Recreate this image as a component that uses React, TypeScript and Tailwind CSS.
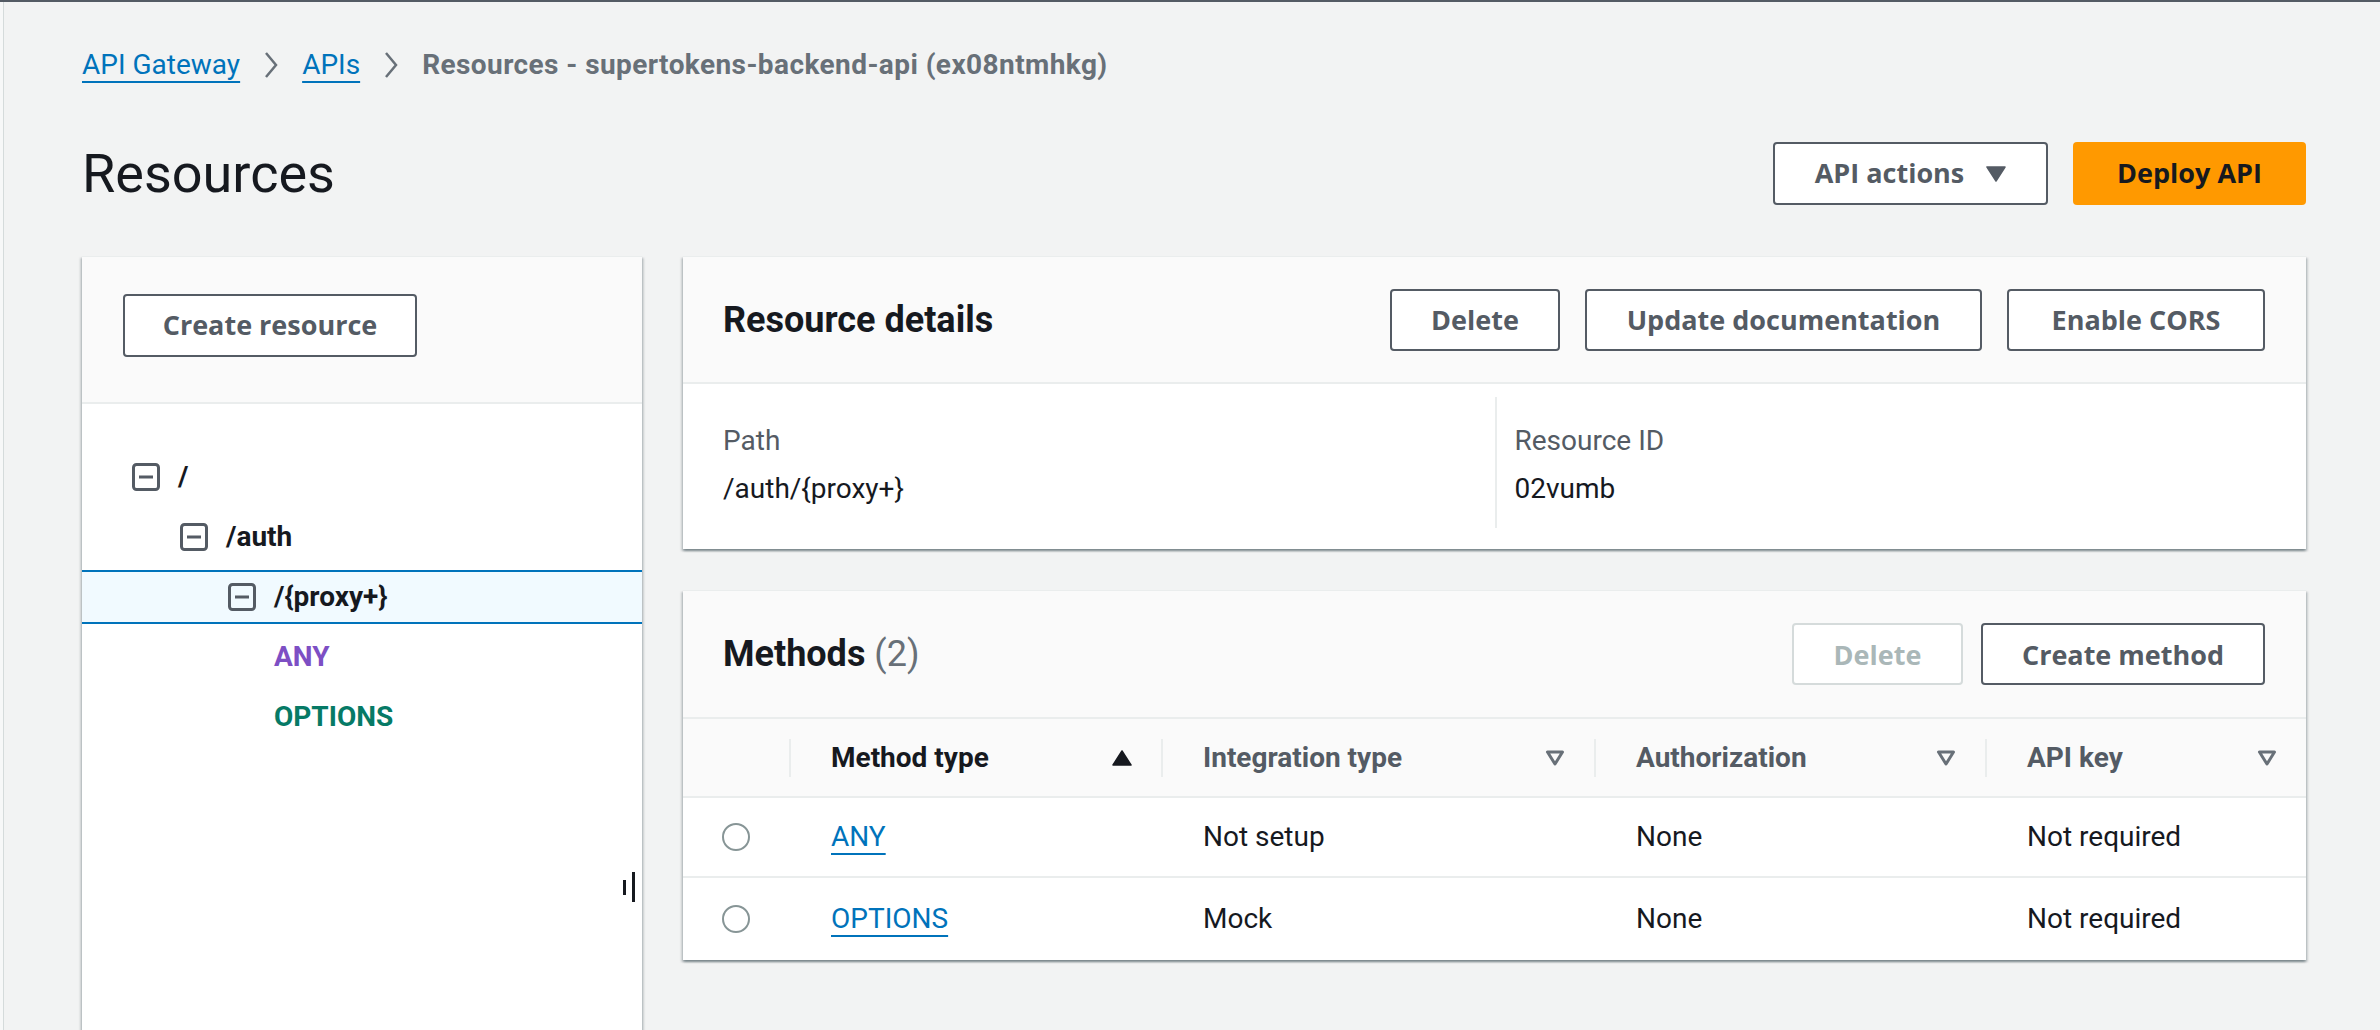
import React from 'react';

const cardShadow =
  'shadow-[0_2px_2px_0_rgba(0,28,36,0.3),2px_2px_2px_0_rgba(0,28,36,0.15),-2px_2px_2px_0_rgba(0,28,36,0.15)]';

const btnFont = "font-['Open_Sans','Roboto',sans-serif]";

function Chevron() {
  return (
    <svg width="16" height="28" viewBox="0 0 16 28" className="mx-[23px] shrink-0">
      <path d="M3 2 L13 14 L3 26" fill="none" stroke="#687078" strokeWidth="2.5" />
    </svg>
  );
}

function MinusBox() {
  return (
    <svg width="28" height="28" viewBox="0 0 28 28" className="shrink-0">
      <rect x="1.5" y="1.5" width="25" height="25" rx="3" fill="none" stroke="#545b64" strokeWidth="3" />
      <rect x="7" y="12.5" width="14" height="3" fill="#545b64" />
    </svg>
  );
}

function CaretDown() {
  return (
    <svg width="20" height="16" viewBox="0 0 20 16" className="shrink-0">
      <path d="M1 1 H19 L10 15 Z" fill="#545b64" stroke="#545b64" strokeWidth="1.5" strokeLinejoin="round" />
    </svg>
  );
}

function SortUp() {
  return (
    <svg width="20" height="16" viewBox="0 0 20 16" className="shrink-0">
      <path d="M10 1 L19 15 H1 Z" fill="#16191f" stroke="#16191f" strokeWidth="1.5" strokeLinejoin="round" />
    </svg>
  );
}

function SortNone() {
  return (
    <svg width="20" height="16" viewBox="0 0 20 16" className="shrink-0">
      <path d="M2.5 2 H17.5 L10 14 Z" fill="none" stroke="#687078" strokeWidth="3" strokeLinejoin="round" />
    </svg>
  );
}

function Button({ children, width, disabled }: { children: React.ReactNode; width: string; disabled?: boolean }) {
  return (
    <button
      className={`${width} h-[62px] rounded-[4px] border-2 bg-white text-[27px] font-bold leading-none whitespace-nowrap ${btnFont} ${
        disabled ? 'border-[#d5dbdb] text-[#aab7b8]' : 'border-[#545b64] text-[#545b64]'
      }`}
    >
      {children}
    </button>
  );
}

function TreeRow({ indent, label, selected }: { indent: string; label: string; selected?: boolean }) {
  return (
    <div
      className={`flex items-center gap-[18px] ${indent} ${
        selected ? 'h-[54px] my-[3px] bg-[#f1faff] border-y-2 border-[#0073bb]' : 'h-[60px]'
      }`}
    >
      <MinusBox />
      <span className="text-[28px] font-bold text-[#16191f]">{label}</span>
    </div>
  );
}

const methods = [
  { name: 'ANY', integration: 'Not setup', auth: 'None', key: 'Not required' },
  { name: 'OPTIONS', integration: 'Mock', auth: 'None', key: 'Not required' },
];

function HeaderCell({ label, active, sort }: { label: string; active?: boolean; sort: 'up' | 'none' }) {
  return (
    <div className="flex items-center h-full">
      <div className="w-[2px] h-[38px] bg-[#eaeded]" />
      <span className={`ml-[40px] flex-1 text-[28px] font-bold ${active ? 'text-[#16191f]' : 'text-[#545b64]'}`}>
        {label}
      </span>
      <div className="mr-[29px]">{sort === 'up' ? <SortUp /> : <SortNone />}</div>
    </div>
  );
}

export default function App() {
  return (
    <div className="h-[1030px] w-[2380px] overflow-hidden bg-[#f2f3f3] font-['Roboto','Helvetica',sans-serif] text-[#16191f] flex flex-col">
      <div className="h-[2px] shrink-0 bg-[#545b64]" />
      <div className="flex flex-1 min-h-0">
        <div className="w-[4px] shrink-0 border-r border-[#d5dbdb] bg-[#f7f8f8]" />
        <main className="ml-[78px] w-[2224px] flex flex-col">
          {/* breadcrumbs */}
          <nav className="mt-[45px] h-[36px] flex items-center text-[28px]">
            <a className="text-[#0073bb] underline decoration-2 underline-offset-[7px]">API Gateway</a>
            <Chevron />
            <a className="text-[#0073bb] underline decoration-2 underline-offset-[7px]">APIs</a>
            <Chevron />
            <span className="font-bold text-[#687078] tracking-[0.42px]">Resources - supertokens-backend-api (ex08ntmhkg)</span>
          </nav>

          {/* page header */}
          <div className="mt-[59px] h-[63px] flex items-center justify-between">
            <h1 className="text-[54px] font-normal leading-none text-[#16191f]">Resources</h1>
            <div className="flex gap-[25px]">
              <button className={`w-[275px] h-[63px] rounded-[4px] border-2 border-[#545b64] bg-white flex items-center justify-center gap-[22px] text-[27px] font-bold text-[#545b64] ${btnFont}`}>
                API actions
                <CaretDown />
              </button>
              <button className={`w-[233px] h-[63px] rounded-[4px] bg-[#ff9900] text-[27px] font-bold text-[#16191f] ${btnFont}`}>
                Deploy API
              </button>
            </div>
          </div>

          <div className="mt-[51px] flex gap-[41px] items-start">
            {/* resource tree */}
            <aside className={`relative w-[560px] h-[820px] shrink-0 bg-white border-t border-[#eaeded] ${cardShadow}`}>
              <div className="bg-[#fafafa] border-b-2 border-[#eaeded] px-[41px] pt-[37px] pb-[45px]">
                <button className={`w-[294px] h-[63px] rounded-[4px] border-2 border-[#545b64] bg-white text-[27px] font-bold text-[#545b64] ${btnFont}`}>
                  Create resource
                </button>
              </div>
              <div className="pt-[43px]">
                <TreeRow indent="pl-[50px]" label="/" />
                <TreeRow indent="pl-[98px]" label="/auth" />
                <TreeRow indent="pl-[146px]" label="/{proxy+}" selected />
                <div className="h-[60px] flex items-center pl-[192px] text-[28px] font-bold text-[#7d4fc4]">ANY</div>
                <div className="h-[60px] flex items-center pl-[192px] text-[28px] font-bold text-[#067a66]">OPTIONS</div>
              </div>
              <div className="absolute left-[541px] top-[615px] flex items-center gap-[6px]">
                <div className="w-[3px] h-[15px] bg-[#16191f]" />
                <div className="w-[3px] h-[30px] bg-[#16191f]" />
              </div>
            </aside>

            <div className="w-[1623px] flex flex-col gap-[41px]">
              {/* resource details */}
              <section className={`bg-white border-t border-[#eaeded] ${cardShadow}`}>
                <div className="h-[127px] flex items-center justify-between bg-[#fafafa] border-b-2 border-[#eaeded] pl-[40px] pr-[41px]">
                  <h2 className="text-[36px] font-bold text-[#16191f]">Resource details</h2>
                  <div className="flex gap-[25px]">
                    <Button width="w-[170px]">Delete</Button>
                    <Button width="w-[397px]">Update documentation</Button>
                    <Button width="w-[258px]">Enable CORS</Button>
                  </div>
                </div>
                <div className="px-[40px] pt-[13px] pb-[21px] grid grid-cols-2">
                  <div className="pt-[24px] pb-[19px] flex flex-col gap-[8px]">
                    <span className="text-[28px] leading-[40px] text-[#545b64]">Path</span>
                    <span className="text-[28px] leading-[40px] text-[#16191f]">/auth/&#123;proxy+&#125;</span>
                  </div>
                  <div className="pt-[24px] pb-[19px] pl-[18px] border-l-2 border-[#eaeded] flex flex-col gap-[8px]">
                    <span className="text-[28px] leading-[40px] text-[#545b64]">Resource ID</span>
                    <span className="text-[28px] leading-[40px] text-[#16191f]">02vumb</span>
                  </div>
                </div>
              </section>

              {/* methods */}
              <section className={`bg-white border-t border-[#eaeded] ${cardShadow}`}>
                <div className="h-[128px] flex items-center justify-between bg-[#fafafa] border-b-2 border-[#eaeded] pl-[40px] pr-[41px]">
                  <h2 className="text-[36px] font-bold text-[#16191f]">
                    Methods <span className="font-normal text-[#687078]">(2)</span>
                  </h2>
                  <div className="flex gap-[18px]">
                    <Button width="w-[171px]" disabled>Delete</Button>
                    <Button width="w-[284px]">Create method</Button>
                  </div>
                </div>
                <div className="grid grid-cols-[106px_372px_433px_391px_321px]">
                  <div className="h-[79px] col-span-5 grid grid-cols-subgrid bg-[#fafafa] border-b-2 border-[#eaeded]">
                    <div />
                    <HeaderCell label="Method type" active sort="up" />
                    <HeaderCell label="Integration type" sort="none" />
                    <HeaderCell label="Authorization" sort="none" />
                    <HeaderCell label="API key" sort="none" />
                  </div>
                  {methods.map((m, i) => (
                    <div
                      key={m.name}
                      className={`col-span-5 grid grid-cols-subgrid items-center text-[28px] ${
                        i === 0 ? 'h-[80px] border-b-2 border-[#eaeded]' : 'h-[82px]'
                      }`}
                    >
                      <div className="pl-[39px]">
                        <div className="w-[28px] h-[28px] rounded-full border-2 border-[#879596]" />
                      </div>
                      <div className="pl-[42px]">
                        <a className="text-[#0073bb] underline decoration-2 underline-offset-[7px]">{m.name}</a>
                      </div>
                      <div className="pl-[42px]">{m.integration}</div>
                      <div className="pl-[42px]">{m.auth}</div>
                      <div className="pl-[42px]">{m.key}</div>
                    </div>
                  ))}
                </div>
              </section>
            </div>
          </div>
        </main>
      </div>
    </div>
  );
}
